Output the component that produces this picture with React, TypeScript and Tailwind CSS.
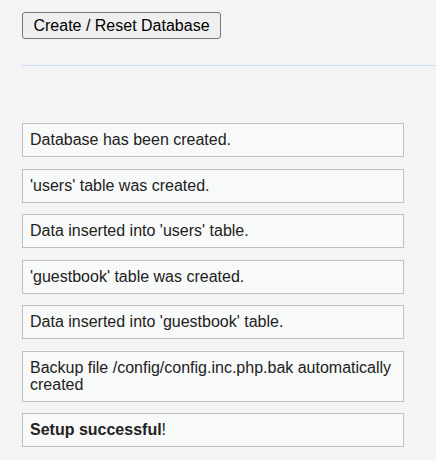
import * as React from "react";

const messages: React.ReactNode[] = [
  "Database has been created.",
  "'users' table was created.",
  "Data inserted into 'users' table.",
  "'guestbook' table was created.",
  "Data inserted into 'guestbook' table.",
  "Backup file /config/config.inc.php.bak automatically created",
  <>
    <b>Setup successful</b>!
  </>,
];

export default function App() {
  return (
    <div className="min-h-[460px] bg-[#f4f4f4] pl-[22px] pt-[12px] font-['Liberation_Sans',Arial,sans-serif] text-[16px] text-[#222]">
      {/* Reset form */}
      <button className="h-[27px] w-[199px] rounded-[3px] border border-[#767676] bg-[#efefef] text-[16px] leading-[18px] text-black">
        Create / Reset Database
      </button>

      <div className="mt-[26px] h-px bg-[#c8dcf8]" />

      {/* Setup output */}
      <div className="mt-[57px] flex w-[382px] flex-col gap-[11.5px]">
        {messages.map((msg, i) => (
          <div
            key={i}
            className="border border-[#c0c0c0] bg-[#f8f9f9] pb-[8px] pl-[7px] pr-[7px] pt-[7px] leading-[17px]"
          >
            {msg}
          </div>
        ))}
      </div>
    </div>
  );
}
